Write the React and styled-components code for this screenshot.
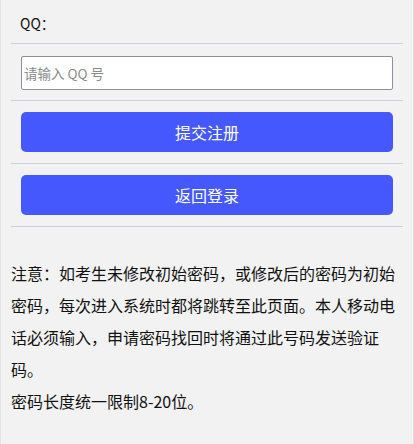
import React from 'react';
import styled, { createGlobalStyle } from 'styled-components';

const GlobalStyle = createGlobalStyle`
  html, body {
    margin: 0;
    padding: 0;
    background: #f2f2f2;
  }
  * {
    box-sizing: border-box;
  }
`;

// Styled Components
const Page = styled.div`
  width: 414px;
  min-height: 100vh;
  background: #f2f2f2;
  border-left: 1px solid #e3e3e3;
  border-right: 1px solid #e3e3e3;
  font-family: 'Noto Sans CJK SC', 'Noto Sans', sans-serif;
  color: #000;
`;

const FormList = styled.div`
  margin: 0 10px;
`;

const Row = styled.div`
  display: flex;
  align-items: center;
  height: ${(props) => props.height}px;
  padding: ${(props) => props.pad || '0 10px'};
  border-bottom: 1px solid #c8d1de;
`;

const Label = styled.span`
  font-family: 'Noto Sans CJK SC', sans-serif;
  font-size: 14px;
  font-weight: 400;
  color: #111;
  padding-top: 2px;
`;

const TextInput = styled.input`
  width: 376px;
  height: 34px;
  margin-top: 1px;
  padding: 0 2px;
  border: 1px solid #8f8e9e;
  border-radius: 2px;
  background: #fff;
  font-family: 'Noto Sans CJK SC', sans-serif;
  font-size: 13.5px;
  outline: none;

  &::placeholder {
    color: #8a8a8a;
  }
`;

const Button = styled.button`
  width: 372px;
  height: 40px;
  border: none;
  border-radius: 5px;
  background: #4458fe;
  color: #fff;
  font-family: 'Noto Sans CJK SC', sans-serif;
  font-size: 16px;
  cursor: pointer;
`;

const Notice = styled.div`
  margin-top: 30px;
  padding: 0 12px 0 10px;
  font-size: 16px;
  line-height: 32px;
  color: #111;
`;

export default function App() {
  return (
    <>
      <GlobalStyle />
      <Page>
        <FormList>
          <Row height={44} pad="0 9px">
            <Label>QQ：</Label>
          </Row>
          <Row height={57}>
            <TextInput placeholder="请输入 QQ 号" />
          </Row>
          <Row height={63}>
            <Button>提交注册</Button>
          </Row>
          <Row height={63}>
            <Button>返回登录</Button>
          </Row>
        </FormList>
        <Notice>
          注意：如考生未修改初始密码，或修改后的密码为初始密码，每次进入系统时都将跳转至此页面。本人移动电话必须输入，申请密码找回时将通过此号码发送验证码。
          <br />
          密码长度统一限制8-20位。
        </Notice>
      </Page>
    </>
  );
}
